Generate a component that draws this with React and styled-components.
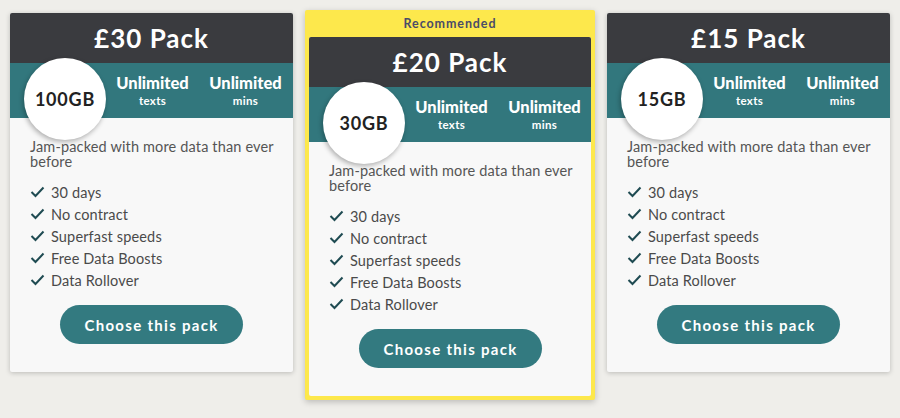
import React from 'react';
import styled, { createGlobalStyle } from 'styled-components';

const GlobalStyle = createGlobalStyle`
	html, body {
		margin: 0;
		padding: 0;
		background: #efeeea;
	}
	body {
		font-family: 'Lato', 'Noto Sans', sans-serif;
		width: 900px;
		height: 418px;
		overflow: hidden;
	}
`;

const Page = styled.div`
	display: flex;
	align-items: flex-start;
	gap: 12px;
	padding: 13px 10px 0;
`;

const Highlight = styled.div`
	margin-top: -3px;
	background: #fde84c;
	padding: 0 4px 4px;
	border-radius: 2px;
	box-shadow: 0 2px 6px rgba(0, 0, 0, 0.22);
`;

const Ribbon = styled.div`
	height: 27px;
	display: flex;
	align-items: center;
	justify-content: center;
	color: #4a4c68;
	font-size: 12.5px;
	font-weight: 700;
	letter-spacing: 0.9px;
`;

const Card = styled.div`
	width: ${(p) => (p.$inner ? '282px' : '283px')};
	background: #f8f8f8;
	border-radius: 2px;
	box-shadow: ${(p) => (p.$inner ? 'none' : '0 1px 5px rgba(0, 0, 0, 0.22)')};
`;

const Title = styled.h2`
	margin: 0;
	height: 50px;
	display: flex;
	align-items: center;
	justify-content: center;
	background: #3a3b3f;
	color: #fff;
	font-size: 26px;
	font-weight: 700;
	letter-spacing: 1px;
	border-radius: 2px 2px 0 0;
`;

const Band = styled.div`
	height: 55px;
	background: #32777d;
	display: flex;
	align-items: flex-start;
	padding-left: 14px;
`;

const Bubble = styled.div`
	position: relative;
	z-index: 1;
	flex-shrink: 0;
	width: 82px;
	height: 82px;
	margin-top: -5px;
	border-radius: 50%;
	background: #fff;
	box-shadow: -1px 2px 5px rgba(0, 0, 0, 0.3);
	display: flex;
	align-items: center;
	justify-content: center;
	font-size: 18px;
	font-weight: 700;
	letter-spacing: 0.8px;
	color: #222;
`;

const Perk = styled.div`
	width: 93px;
	padding-top: 10px;
	text-align: center;
	color: #fff;
	font-weight: 700;
	strong {
		display: block;
		font-size: 16.5px;
		line-height: 20px;
	}
	span {
		display: block;
		font-size: 11.5px;
		line-height: 16px;
		letter-spacing: 0.3px;
	}
`;

const Body = styled.div`
	padding: 21px 12px 28px 20px;
`;

const Blurb = styled.p`
	margin: 0 0 12px;
	font-size: 14.5px;
	line-height: 15px;
	letter-spacing: 0.15px;
	color: #555;
`;

const Features = styled.ul`
	list-style: none;
	margin: 0;
	padding: 0;
`;

const Feature = styled.li`
	display: flex;
	align-items: center;
	gap: 6px;
	height: 22px;
	font-size: 14.5px;
	letter-spacing: 0.15px;
	color: #4a4a4a;
	svg {
		flex-shrink: 0;
	}
`;

const ChooseButton = styled.button`
	display: block;
	width: 183px;
	height: 39px;
	margin: 14px 0 0 30px;
	border: none;
	border-radius: 20px;
	background: #337a80;
	color: #fff;
	font-family: inherit;
	font-size: 15px;
	font-weight: 700;
	letter-spacing: 1.3px;
`;

const Tick = () => (
	<svg width="15" height="12" viewBox="0 0 15 12">
		<polyline points="1.5,6 5.5,10 13.5,1.5" fill="none" stroke="#1f4b52" strokeWidth="2" />
	</svg>
);

const features = ['30 days', 'No contract', 'Superfast speeds', 'Free Data Boosts', 'Data Rollover'];

function PackCard({ price, data, inner }) {
	return (
		<Card $inner={inner}>
			<Title>£{price} Pack</Title>
			<Band>
				<Bubble>{data}</Bubble>
				<Perk>
					<strong>Unlimited</strong>
					<span>texts</span>
				</Perk>
				<Perk>
					<strong>Unlimited</strong>
					<span>mins</span>
				</Perk>
			</Band>
			<Body>
				<Blurb>Jam-packed with more data than ever before</Blurb>
				<Features>
					{features.map((f) => (
						<Feature key={f}>
							<Tick />
							{f}
						</Feature>
					))}
				</Features>
				<ChooseButton>Choose this pack</ChooseButton>
			</Body>
		</Card>
	);
}

export default function App() {
	return (
		<>
			<GlobalStyle />
			<Page>
				<PackCard price={30} data="100GB" />
				<Highlight>
					<Ribbon>Recommended</Ribbon>
					<PackCard price={20} data="30GB" inner />
				</Highlight>
				<PackCard price={15} data="15GB" />
			</Page>
		</>
	);
}
